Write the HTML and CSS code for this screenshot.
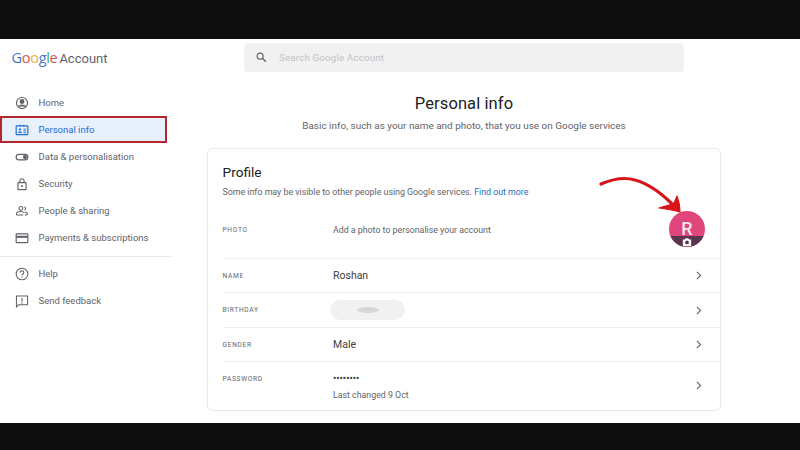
FILE: index.html
```html
<!DOCTYPE html>
<html lang="en">
<head>
<meta charset="utf-8">
<title>Personal info</title>
<link rel="stylesheet" href="styles.css">
</head>
<body>
<div class="bar bar-top"></div>
<div class="screen">
  <header class="header">
    <div class="logo"><span class="g1">G</span><span class="g2">o</span><span class="g3">o</span><span class="g1">g</span><span class="g4">l</span><span class="g2">e</span> <span class="logo-acc">Account</span></div>
    <div class="search">
      <svg class="search-ic" viewBox="0 0 24 24"><circle cx="9.5" cy="9.5" r="5.6" fill="none" stroke="#5f6368" stroke-width="2"/><path d="M14 14l6 6" stroke="#5f6368" stroke-width="2.4" fill="none"/></svg>
      <span class="search-text">Search Google Account</span>
    </div>
  </header>
  <div class="body">
    <nav class="side">
      <div class="item">
        <svg class="ic" viewBox="0 0 24 24" fill="none" stroke="#5f6368" stroke-width="2"><circle cx="12" cy="12" r="9.5"/><circle cx="12" cy="9.5" r="3.2" fill="#5f6368"/><path d="M5.5 18c2-3.4 11-3.4 13 0" fill="#5f6368"/></svg>
        <span>Home</span>
      </div>
      <div class="item active">
        <svg class="ic" viewBox="0 0 24 24" fill="none" stroke="#1a6fd0" stroke-width="2"><rect x="2" y="5" width="20" height="15" rx="1"/><path d="M9 3v3M15 3v3"/><circle cx="8.5" cy="11" r="1.8" fill="#1a6fd0" stroke="none"/><path d="M5 17c.5-3 6.500-3 7 0z" fill="#1a6fd0" stroke="none"/><path d="M14.500 10.500H19M14.500 13.500H19M14.500 16.500H19" stroke-width="1.500"/></svg>
        <span>Personal info</span>
      </div>
      <div class="item">
        <svg class="ic" viewBox="0 0 24 24" fill="none" stroke="#5f6368" stroke-width="2"><rect x="2" y="7.500" width="20" height="9.500" rx="4.700"/><circle cx="17" cy="12.200" r="3.600" fill="#5f6368" stroke="none"/></svg>
        <span>Data &amp; personalisation</span>
      </div>
      <div class="item">
        <svg class="ic" viewBox="0 0 24 24" fill="none" stroke="#5f6368" stroke-width="2"><rect x="5" y="9.500" width="14" height="12" rx="1"/><path d="M8.500 9.500V6.500a3.500 3.500 0 0 1 7 0v3"/><circle cx="12" cy="15.500" r="1.700" fill="#5f6368" stroke="none"/></svg>
        <span>Security</span>
      </div>
      <div class="item">
        <svg class="ic" viewBox="0 0 24 24" fill="none" stroke="#5f6368" stroke-width="1.800"><circle cx="10" cy="7.500" r="3.300"/><path d="M2.500 19v-2c0-3 4-4 7.500-4s5 1 6 2.500M2.500 19H14"/><path d="M16 4.500a3.200 3.200 0 0 1 0 6"/><path d="M17 14h2.500l2 2.500-2 2.500H17" /></svg>
        <span>People &amp; sharing</span>
      </div>
      <div class="item">
        <svg class="ic" viewBox="0 0 24 24" fill="none" stroke="#5f6368" stroke-width="2"><rect x="2" y="5" width="20" height="15" rx="1"/><path d="M2 10h20" stroke-width="3.500"/></svg>
        <span>Payments &amp; subscriptions</span>
      </div>
      <div class="side-rule"></div>
      <div class="item">
        <svg class="ic" viewBox="0 0 24 24" fill="none" stroke="#5f6368" stroke-width="1.800"><circle cx="12" cy="12" r="10"/><path d="M9 9.500a3 3 0 1 1 4.500 2.600c-1 .6-1.500 1.200-1.500 2.400"/><path d="M12 16.500v2"/></svg>
        <span>Help</span>
      </div>
      <div class="item">
        <svg class="ic" viewBox="0 0 24 24" fill="none" stroke="#5f6368" stroke-width="1.800"><path d="M2.500 3.500h19v15H6l-3.500 3.500z"/><path d="M12 7v6M12 14.500v2" stroke-width="2"/></svg>
        <span>Send feedback</span>
      </div>
    </nav>
    <main class="main">
      <h1 class="title">Personal info</h1>
      <p class="sub">Basic info, such as your name and photo, that you use on Google services</p>
      <section class="card">
        <div class="card-head">
          <h2 class="card-title">Profile</h2>
          <p class="card-note">Some info may be visible to other people using Google services. <a class="link">Find out more</a></p>
        </div>
        <div class="row row-photo">
          <span class="label">PHOTO</span>
          <span class="value muted">Add a photo to personalise your account</span>
          <div class="avatar"><span class="avatar-r">R</span><span class="avatar-band"><svg class="cam" viewBox="0 0 24 24"><path d="M2 6h5l2-3h6l2 3h5v16H2z" fill="#fff"/><circle cx="12" cy="13" r="4.500" fill="#5a3550"/></svg></span></div>
          <svg class="arrow" viewBox="0 0 95 45" fill="none"><path d="M6 12C20 6 30 5 40 8C55 12 70 24 83 38" stroke="#d8141b" stroke-width="3.200" stroke-linecap="round"/><path d="M64 36C70 34 74 33 78 32C80 30 81 27 82 24C84 29 85 34 85 40C78 38 71 37 64 36z" fill="#d8141b" stroke="#d8141b" stroke-width="1.200" stroke-linejoin="round"/></svg>
        </div>
        <div class="row row-name">
          <span class="label">NAME</span><span class="value">Roshan</span>
          <svg class="chev" viewBox="0 0 24 24"><path d="M8.500 4l8 8-8 8" fill="none" stroke="#5f6368" stroke-width="2.400"/></svg>
        </div>
        <div class="row row-birth">
          <span class="label">BIRTHDAY</span><span class="pill"><span class="smudge"></span></span>
          <svg class="chev" viewBox="0 0 24 24"><path d="M8.500 4l8 8-8 8" fill="none" stroke="#5f6368" stroke-width="2.400"/></svg>
        </div>
        <div class="row row-gender">
          <span class="label">GENDER</span><span class="value">Male</span>
          <svg class="chev" viewBox="0 0 24 24"><path d="M8.500 4l8 8-8 8" fill="none" stroke="#5f6368" stroke-width="2.400"/></svg>
        </div>
        <div class="row row-pass">
          <span class="label label-top">PASSWORD</span>
          <div class="value-stack"><span class="dots">••••••••</span><span class="changed">Last changed 9 Oct</span></div>
          <svg class="chev" viewBox="0 0 24 24"><path d="M8.500 4l8 8-8 8" fill="none" stroke="#5f6368" stroke-width="2.400"/></svg>
        </div>
      </section>
    </main>
  </div>
</div>
<div class="bar bar-bottom"></div>
</body>
</html>
```

FILE: styles.css
```css
* { box-sizing: border-box; }
html, body { margin: 0; padding: 0; }
body {
  width: 800px;
  height: 450px;
  overflow: hidden;
  display: flex;
  flex-direction: column;
  background: #fff;
  font-family: Roboto, "Liberation Sans", sans-serif;
  color: #3c4043;
}
.bar { background: #0d0d0d; flex: none; }
.bar-top { height: 39px; }
.bar-bottom { height: 27px; }
.screen { height: 384px; flex: none; background: #fff; }

.header { height: 37px; display: flex; align-items: flex-start; }
.logo {
  width: 244px;
  padding: 9px 0 0 11.500px;
  font-family: "Open Sans", Roboto, sans-serif;
  font-size: 14.500px;
  line-height: 20px;
  letter-spacing: -0.3px;
  white-space: nowrap;
}
.g1 { color: #4a76c8; }
.g2 { color: #d9534a; }
.g3 { color: #e8b23c; }
.g4 { color: #4fa35f; }
.logo-acc { color: #5f6368; font-family: Roboto, sans-serif; font-size: 13px; letter-spacing: 0; margin-left: -1.500px; }
.search {
  width: 440px;
  height: 29px;
  margin-top: 4px;
  background: #f1f1f1;
  border-radius: 4px;
  display: flex;
  align-items: center;
  padding-left: 11px;
}
.search-ic { width: 13px; height: 13px; flex: none; }
.search-text { margin-left: 11px; font-size: 9.700px; color: #c0c2c4; letter-spacing: 0.2px; }

.body { display: flex; }
.side { width: 207px; flex: none; padding-top: 13px; }
.item {
  width: 167px;
  height: 27px;
  display: flex;
  align-items: center;
  padding-left: 15px;
  font-size: 9.500px;
  color: #5f6368;
}
.item span { margin-left: 9.500px; white-space: nowrap; }
.ic { width: 14px; height: 14px; flex: none; }
.active {
  background: #e8f0fe;
  color: #1a6fd0;
  outline: 2px solid #b5272f;
  outline-offset: -2px;
}
.side-rule { width: 172px; height: 1px; background: #e8eaed; margin: 5px 0 3px; }

.main { width: 514px; flex: none; }
.title {
  margin: 17px 0 0;
  font-size: 16.500px;
  font-weight: 400;
  line-height: 22px;
  text-align: center;
  color: #202124;
  letter-spacing: 0.1px;
}
.sub {
  margin: 4px 0 0;
  font-size: 9.950px;
  line-height: 14px;
  text-align: center;
  color: #5f6368;
}
.card {
  margin-top: 15px;
  height: 263px;
  border: 1px solid #e6e7e9;
  border-radius: 6px;
  padding-left: 14.500px;
}
.card-head { height: 46px; padding-top: 15px; }
.card-title { margin: 0; font-size: 13.700px; font-weight: 400; line-height: 17px; color: #202124; }
.card-note { margin: 5px 0 0; font-size: 8.820px; line-height: 12px; color: #5f6368; white-space: nowrap; }
.link { color: #1a6fc0; }

.row {
  position: relative;
  display: flex;
  align-items: center;
  border-top: 1px solid #eceef0;
  padding-right: 16px;
}
.row-photo { border-top: 0; height: 63px; padding-top: 7px; }
.row-name { height: 34px; }
.row-birth { height: 35px; }
.row-gender { height: 34px; }
.row-pass { height: 49px; align-items: flex-start; }
.label {
  width: 110.500px;
  flex: none;
  font-size: 6.600px;
  letter-spacing: 0.7px;
  color: #5f6368;
}
.label-top { margin-top: 13px; }
.value { font-size: 10.500px; color: #3c4043; }
.muted { font-size: 8.800px; color: #5f6368; }
.pill {
  width: 75px;
  height: 20px;
  margin-left: -3px;
  background: #f1f1f1;
  border-radius: 10px;
  display: flex;
  align-items: center;
  justify-content: center;
}
.smudge { width: 22px; height: 6px; border-radius: 50%; background: #d5d8db; }
.value-stack { display: flex; flex-direction: column; }
.dots { font-size: 9px; line-height: 10px; margin-top: 11px; color: #3c4043; letter-spacing: 0.05px; font-weight: 700; }
.changed { margin-top: 6px; font-size: 8.800px; line-height: 12px; color: #5f6368; }
.chev { width: 11px; height: 11px; margin-left: auto; flex: none; }
.row-pass .chev { margin-top: 18px; }

.avatar {
  position: absolute;
  top: 16px;
  right: 15px;
  width: 36px;
  height: 36px;
  border-radius: 50%;
  overflow: hidden;
  background: #e0457b;
  text-align: center;
}
.avatar-r { display: block; font-size: 18px; line-height: 28px; margin-top: 4px; color: #f6e4ec; font-weight: 500; }
.avatar-band { position: absolute; left: 0; right: 0; bottom: 0; height: 11px; background: #5a3550; display: flex; justify-content: center; }
.cam { width: 10px; height: 10px; margin-top: 1px; }
.arrow { position: absolute; top: -23px; right: 30px; width: 95px; height: 45px; overflow: visible; }
```
